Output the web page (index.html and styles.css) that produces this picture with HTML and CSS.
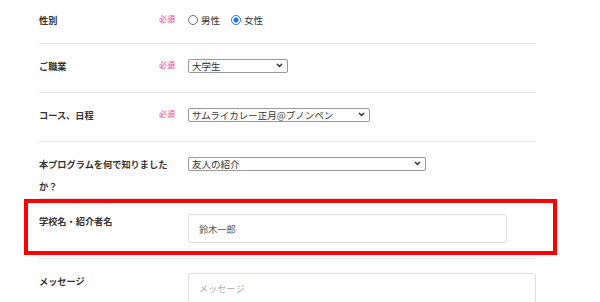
FILE: index.html
```html
<!DOCTYPE html>
<html lang="ja">
<head>
<meta charset="utf-8">
<title>フォーム</title>
<link rel="stylesheet" href="styles.css">
</head>
<body>
<form class="form">
  <div class="row row--first">
    <div class="label"><span class="label-text">性別</span><span class="req">必須</span></div>
    <div class="field">
      <label class="radio"><input type="radio" name="sex">男性</label>
      <label class="radio"><input type="radio" name="sex" checked>女性</label>
    </div>
  </div>
  <div class="row">
    <div class="label"><span class="label-text">ご職業</span><span class="req">必須</span></div>
    <div class="field">
      <span class="select-wrap select-wrap--s">
        <select class="select"><option>大学生</option></select>
        <svg class="chev" width="7" height="5" viewBox="0 0 7 5"><path d="M1 1l2.5 2.5L6 1" fill="none" stroke="#333" stroke-width="1.5"/></svg>
      </span>
    </div>
  </div>
  <div class="row">
    <div class="label"><span class="label-text">コース、日程</span><span class="req">必須</span></div>
    <div class="field">
      <span class="select-wrap select-wrap--m">
        <select class="select"><option>サムライカレー正月@プノンペン</option></select>
        <svg class="chev" width="7" height="5" viewBox="0 0 7 5"><path d="M1 1l2.5 2.5L6 1" fill="none" stroke="#333" stroke-width="1.5"/></svg>
      </span>
    </div>
  </div>
  <div class="row row--tall">
    <div class="label"><span class="label-text">本プログラムを何で知りましたか？</span></div>
    <div class="field">
      <span class="select-wrap select-wrap--l">
        <select class="select"><option>友人の紹介</option></select>
        <svg class="chev" width="7" height="5" viewBox="0 0 7 5"><path d="M1 1l2.5 2.5L6 1" fill="none" stroke="#333" stroke-width="1.5"/></svg>
      </span>
    </div>
  </div>
  <div class="row row--highlight">
    <div class="label"><span class="label-text">学校名・紹介者名</span></div>
    <div class="field">
      <input class="text-input" type="text" value="鈴木一郎">
    </div>
  </div>
  <div class="row row--last">
    <div class="label"><span class="label-text">メッセージ</span></div>
    <div class="field">
      <textarea class="textarea" placeholder="メッセージ"></textarea>
    </div>
  </div>
</form>
</body>
</html>
```
FILE: styles.css
```css
html, body {
  margin: 0;
  padding: 0;
  background: #fff;
  overflow: hidden;
}
body {
  font-family: "Noto Sans CJK JP", "Noto Sans", sans-serif;
  color: #333;
}
.form {
  margin: 0 0 0 39px;
  width: 497px;
}
.row {
  display: grid;
  grid-template-columns: 149px 1fr;
  padding: 11px 0 15px;
  border-bottom: 1px solid #e4e4e4;
  position: relative;
}
.row--first { padding: 9px 0 12px; }
.row--tall { padding-bottom: 1px; }
.row--last { border-bottom: none; }
.row--highlight::after {
  content: "";
  position: absolute;
  left: -15px;
  right: -21px;
  top: 0;
  bottom: 3px;
  border: 4px solid #ff0000;
  pointer-events: none;
}
.label {
  display: flex;
  justify-content: space-between;
  align-items: flex-start;
  padding-right: 13px;
  line-height: 22px;
}
.label-text {
  font-size: 9.2px;
  font-weight: bold;
  color: #333;
  max-width: 132px;
}
.req {
  font-size: 8px;
  color: #f0408a;
  line-height: 20px;
}
.field {
  display: flex;
  align-items: flex-start;
  min-height: 22px;
}
.radio {
  display: inline-flex;
  align-items: center;
  height: 22px;
  font-size: 9.5px;
  color: #333;
  margin-right: 11px;
}
.radio input {
  appearance: none;
  -webkit-appearance: none;
  width: 10px;
  height: 10px;
  margin: 0 3px 0 0;
  border: 1px solid #707070;
  border-radius: 50%;
  background: #fff;
  box-sizing: border-box;
}
.radio input:checked {
  border: 1px solid #1b78f2;
  background: radial-gradient(circle, #1b78f2 0 2.3px, #fff 2.8px);
}
.select-wrap {
  position: relative;
  display: inline-block;
  margin-top: 4px;
  height: 14px;
}
.select-wrap--s { width: 100px; }
.select-wrap--m { width: 182px; }
.select-wrap--l { width: 238px; }
.select {
  appearance: none;
  -webkit-appearance: none;
  width: 100%;
  height: 14px;
  box-sizing: border-box;
  margin: 0;
  padding: 0 16px 0 3px;
  border: 1px solid #999;
  border-radius: 2px;
  background: #fff;
  font-family: inherit;
  font-size: 9.5px;
  line-height: 12px;
  color: #333;
  display: block;
}
.chev {
  position: absolute;
  right: 5px;
  top: 4px;
  pointer-events: none;
}
.text-input {
  margin: 4px 0 0;
  width: 319px;
  height: 29px;
  box-sizing: border-box;
  border: 1px solid #dcdcdc;
  border-radius: 3px;
  padding: 0 10px;
  font-family: inherit;
  font-size: 9.2px;
  color: #555;
  background: #fff;
  outline: none;
}
.textarea {
  margin: 3px 0 0;
  width: 348px;
  height: 44px;
  box-sizing: border-box;
  border: 1px solid #dcdcdc;
  border-radius: 3px;
  padding: 8px 10px;
  font-family: inherit;
  font-size: 9.2px;
  line-height: 12px;
  color: #555;
  resize: none;
  background: #fff;
}
.textarea::placeholder { color: #aaa; }
```
